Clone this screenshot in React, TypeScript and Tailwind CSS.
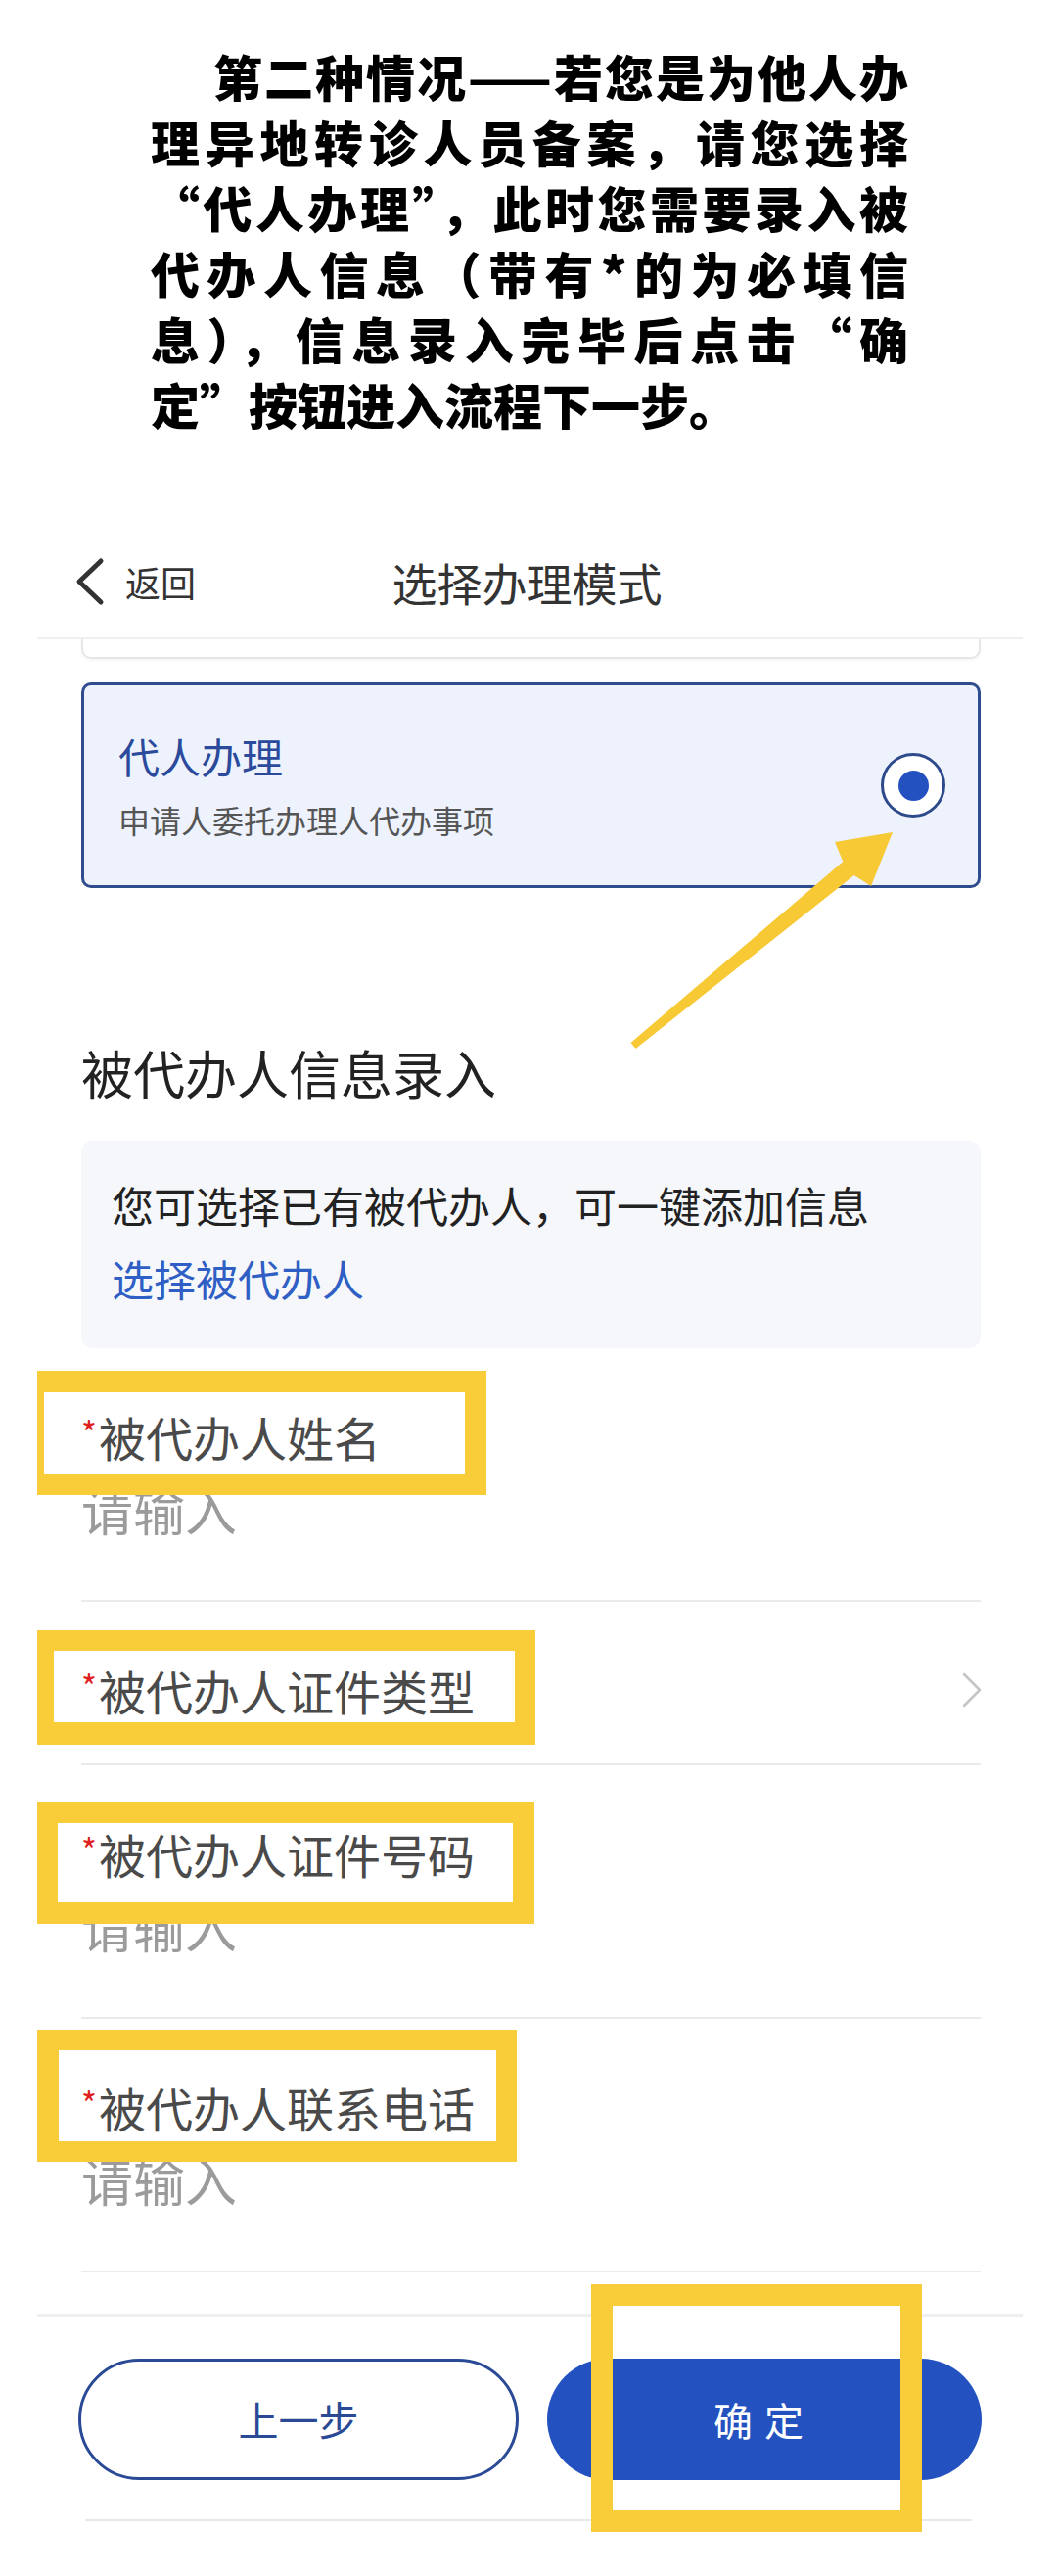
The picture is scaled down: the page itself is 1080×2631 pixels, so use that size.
import React from "react";

const cjk = "font-['Noto_Sans_CJK_SC','Noto_Sans',sans-serif]";

function Label({ text }: { text: string }) {
  return (
    <div className="leading-[60px] text-[48px] text-[#4a4a4a]">
      <span className="text-[34px] leading-[0px] text-[#e02020] [vertical-align:11px] mr-[2px]">*</span>
      {text}
    </div>
  );
}

function Field({
  label,
  placeholder,
  chevron,
}: {
  label: string;
  placeholder?: boolean;
  chevron?: boolean;
}) {
  if (chevron) {
    return (
      <div className="pt-[60px] pb-[45px] border-b-2 border-[#ebebeb] flex items-center justify-between">
        <Label text={label} />
        <svg width="22" height="36" viewBox="0 0 22 36" className="mr-[-2px]">
          <polyline points="3,2 19,18 3,34" fill="none" stroke="#c4c4c4" strokeWidth="2.5" strokeLinecap="round" strokeLinejoin="round" />
        </svg>
      </div>
    );
  }
  return (
    <div className="pt-[60px] pb-[63px] border-b-2 border-[#ebebeb]">
      <Label text={label} />
      {placeholder && (
        <div className="mt-[14px] leading-[60px] text-[53px] text-[#9b9b9b]">请输入</div>
      )}
    </div>
  );
}

export default function App() {
  return (
    <div className={`relative w-[1080px] h-[2631px] bg-white overflow-hidden ${cjk}`}>
      {/* instruction text */}
      <div className="pt-[44px] pl-[154px] w-[928px] text-[50px] font-[900] text-black">
        <div className="h-[67px] leading-[67px] pl-[64px] text-justify [text-align-last:justify] whitespace-nowrap">
          第二种情况——若您是为他人办
        </div>
        <div className="h-[67px] leading-[67px] text-justify [text-align-last:justify] whitespace-nowrap">
          理异地转诊人员备案，请您选择
        </div>
        <div className="h-[67px] leading-[67px] text-justify [text-align-last:justify] whitespace-nowrap">
          “代人办理”，此时您需要录入被
        </div>
        <div className="h-[67px] leading-[67px] text-justify [text-align-last:justify] whitespace-nowrap">
          代办人信息（带有*的为必填信
        </div>
        <div className="h-[67px] leading-[67px] text-justify [text-align-last:justify] whitespace-nowrap">
          息），信息录入完毕后点击“确
        </div>
        <div className="h-[67px] leading-[67px] whitespace-nowrap">定”按钮进入流程下一步。</div>
      </div>

      {/* phone screenshot */}
      <div className="mt-[91px] ml-[38px] w-[1007px]">
        {/* nav */}
        <div className="grid grid-cols-[1fr_auto_1fr] items-center h-[116px] border-b-2 border-[#efefef]">
          <div className="flex items-center pl-[39px] gap-[21px]">
            <svg width="30" height="50" viewBox="0 0 30 50">
              <polyline points="26,4 4,25 26,46" fill="none" stroke="#333333" strokeWidth="5" strokeLinecap="round" strokeLinejoin="round" />
            </svg>
            <span className="text-[36px] leading-[50px] text-[#333333]">返回</span>
          </div>
          <div className="text-[46px] leading-[60px] text-[#333333] mr-[6px]">选择办理模式</div>
          <div />
        </div>

        <div className="pl-[45px] pr-[43px]">
          {/* previous card stub */}
          <div className="h-[20px] border-2 border-t-0 border-[#e6e6e6] rounded-b-[10px] shadow-[0_2px_3px_rgba(0,0,0,0.04)]" />

          {/* selected card */}
          <div className="mt-[24px] h-[210px] border-[3px] border-[#2f4c8f] bg-[#edf2fc] rounded-[10px] flex items-center justify-between pl-[35px] pr-[33px]">
            <div>
              <div className="text-[42px] leading-[50px] text-[#2b4a9b]">代人办理</div>
              <div className="mt-[20px] text-[32px] leading-[40px] text-[#555555]">申请人委托办理人代办事项</div>
            </div>
            <div className="w-[66px] h-[66px] rounded-full border-[3px] border-[#2d4a8c] bg-white flex items-center justify-center">
              <div className="w-[31px] h-[31px] rounded-full bg-[#2352c0]" />
            </div>
          </div>

          {/* section title */}
          <div className="mt-[153px] text-[53px] leading-[70px] text-[#222222]">被代办人信息录入</div>

          {/* info box */}
          <div className="mt-[35px] h-[212px] rounded-[12px] bg-[#f5f7fa] pl-[31px] pt-[35px]">
            <div className="text-[43px] leading-[60px] text-[#222222]">您可选择已有被代办人，可一键添加信息</div>
            <div className="mt-[15px] text-[43px] leading-[60px] text-[#2f5ec4]">选择被代办人</div>
          </div>

          {/* fields */}
          <Field label="被代办人姓名" placeholder />
          <Field label="被代办人证件类型" chevron />
          <Field label="被代办人证件号码" placeholder />
          <Field label="被代办人联系电话" placeholder />
        </div>

        {/* footer */}
        <div className="mt-[42px] border-t-[3px] border-[#efefef] pt-[43px] px-[42px] flex gap-[29px]">
          <div className="flex-1 h-[124px] rounded-full border-[3px] border-[#2a4a96] bg-white flex items-center justify-center text-[41px] text-[#2a4a96]">
            上一步
          </div>
          <div className="flex-1 h-[124px] rounded-full bg-[#2352c0] flex items-center justify-center text-[40px] tracking-[12px] text-white">
            确定
          </div>
        </div>
        <div className="mt-[40px] ml-[49px] mr-[52px] h-[2px] bg-[#e8e8e8]" />
      </div>

      {/* annotation overlays */}
      <div className="absolute left-[626px] top-[2358px] w-[294px] h-[12px] bg-white" />
      <div className="absolute left-[38px] top-[1400px] w-[459px] h-[127px] border-solid border-[#f9cd3a] border-l-[7px] border-r-[22px] border-t-[22px] border-b-[22px]" />
      <div className="absolute left-[38px] top-[1665px] w-[509px] h-[117px] border-solid border-[#f9cd3a] border-l-[17px] border-r-[21px] border-t-[21px] border-b-[23px]" />
      <div className="absolute left-[38px] top-[1840px] w-[508px] h-[125px] border-solid border-[#f9cd3a] border-l-[21px] border-r-[22px] border-t-[22px] border-b-[22px]" />
      <div className="absolute left-[38px] top-[2073px] w-[490px] h-[135px] border-solid border-[#f9cd3a] border-l-[22px] border-r-[21px] border-t-[21px] border-b-[21px]" />
      <div className="absolute left-[604px] top-[2333px] w-[338px] h-[253px] border-solid border-[#f9cd3a] border-[22px]" />

      <svg className="absolute left-0 top-0 pointer-events-none" width="1080" height="2631" viewBox="0 0 1080 2631">
        <polygon
          points="644.5,1064.9 861.3,880.1 853,860 912,850 890,905 872.7,893.9 649.5,1071.1"
          fill="#f7c935"
        />
      </svg>
    </div>
  );
}
